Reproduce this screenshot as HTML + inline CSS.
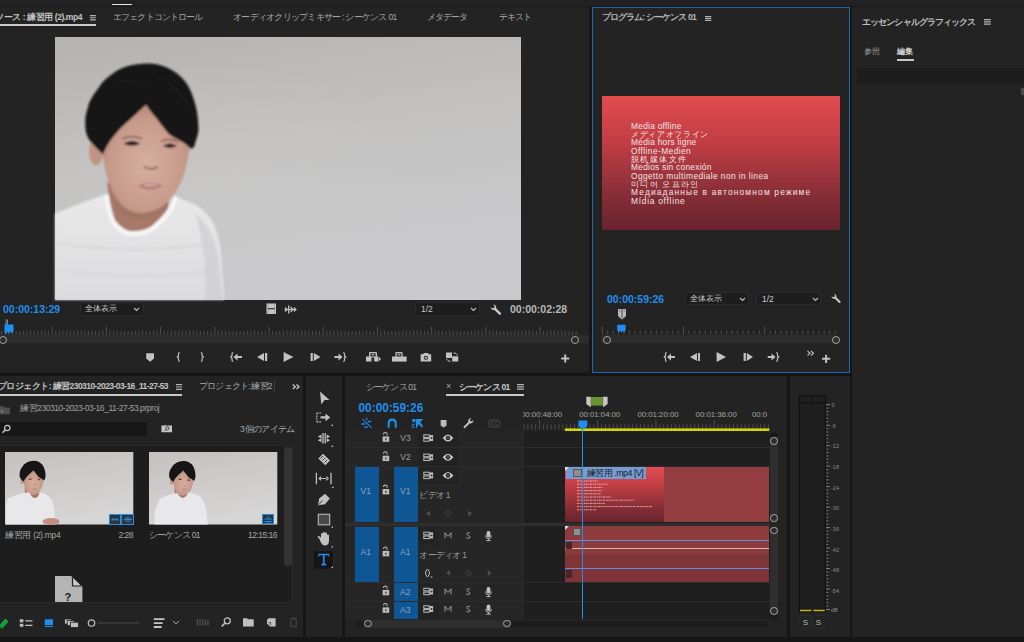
<!DOCTYPE html>
<html><head><meta charset="utf-8">
<style>
*{margin:0;padding:0;box-sizing:border-box}
html,body{width:1024px;height:642px;overflow:hidden;background:#161616;font-family:"Liberation Sans",sans-serif;color:#a9a9a9}
.a{position:absolute}
.t{position:absolute;white-space:nowrap;font-size:8.5px;line-height:10px}
.pnl{position:absolute;background:#232323;overflow:hidden}
.blue{color:#1f8fef}
svg{position:absolute;overflow:visible}
</style></head><body>

<!-- top band -->
<div class="a" style="left:0;top:0;width:1024px;height:6px;background:#222"></div>
<div class="a" style="left:112px;top:3.7px;width:19.6px;height:1.6px;border-radius:1px;background:#e4e4e4"></div>

<!-- ================= SOURCE PANEL ================= -->
<div class="pnl" style="left:0;top:6px;width:589px;height:366.5px" id="src">
<!-- tabs (coords relative: top 6) -->
<div class="t" style="left:-5px;top:5.8px;color:#c4c4c4;font-weight:bold;letter-spacing:-0.42px">ソース : 練習用 (2).mp4</div>
<svg style="left:90.3px;top:8.8px" width="5.8" height="5.5"><path d="M0 0.6H5.8M0 2.75H5.8M0 4.90H5.8" stroke="#b4b4b4" stroke-width="1.2"/></svg>
<div class="a" style="left:0;top:18px;width:96px;height:2px;background:#c8c8c8"></div>
<div class="t" style="left:113px;top:5.8px;letter-spacing:-0.86px">エフェクトコントロール</div>
<div class="t" style="left:233px;top:5.8px;letter-spacing:-0.73px">オーディオクリップミキサー : シーケンス 01</div>
<div class="t" style="left:427px;top:5.8px;letter-spacing:-0.95px">メタデータ</div>
<div class="t" style="left:499px;top:5.8px;letter-spacing:-1.1px">テキスト</div>
<!-- photo -->
<svg style="left:55px;top:31px" width="466" height="263" viewBox="0 0 466 262" preserveAspectRatio="none" id="photo">
<defs>
<linearGradient id="wall" x1="0" y1="0" x2="0.3" y2="1">
<stop offset="0" stop-color="#b5b3b0"/><stop offset="0.5" stop-color="#c3c2c1"/><stop offset="1" stop-color="#cacacd"/>
</linearGradient>
<radialGradient id="wallspot" cx="0.35" cy="0.6" r="0.5">
<stop offset="0" stop-color="#cbcac9" stop-opacity="0.5"/><stop offset="1" stop-color="#cbcac9" stop-opacity="0"/>
</radialGradient>
<radialGradient id="skin" cx="0.5" cy="0.55" r="0.6">
<stop offset="0" stop-color="#d6b0a0"/><stop offset="0.7" stop-color="#c69a8a"/><stop offset="1" stop-color="#ae8474"/>
</radialGradient>
<linearGradient id="swt" x1="0" y1="0" x2="0" y2="1">
<stop offset="0" stop-color="#e8e8e9"/><stop offset="1" stop-color="#dcdcde"/>
</linearGradient>
<filter id="bl" x="-5%" y="-5%" width="110%" height="110%"><feGaussianBlur stdDeviation="0.9"/></filter>
</defs>
<rect width="466" height="262" fill="url(#wall)"/><rect width="466" height="262" fill="url(#wallspot)"/>
<g filter="url(#bl)">
<g id="head">
<!-- neck -->
<path d="M52 145 L114 145 L113 175 L105 190 L78 197 L58 186 Z" fill="#a87868"/>
<path d="M60 160 Q85 185 112 160 L112 172 Q85 190 60 172 Z" fill="#9c7464" opacity="0.7"/>
<!-- ear -->
<ellipse cx="41" cy="114" rx="7" ry="14" fill="#c09484"/>
<!-- face -->
<path d="M47 100 C47 125 52 145 62 162 C70 173 80 177 92 175 C108 172 120 160 128 140 C133 125 135 110 136 95 C130 60 60 55 47 100 Z" fill="url(#skin)"/>
<!-- hair -->
<path d="M94.8 26.4 C80 26 65 30 57 37 C50 42 46 46 44.3 49.8 C38 58 34 64 33 70 C31 76 30 80 30.3 85.3 C30 92 31 97 34 102 C38 108 44 113 48 117 C52 108 56 102 61 96.5 C66 90 71 86 76 81.5 C82 76 87 71 91 67.5 C94 72 97 76 100.4 79.7 C105 86 109 91 113.5 96.5 C118 100 122 102 126.5 104 C130 106 133 108 136 111.5 C139 110 140 109 139.6 107.7 C142 100 144 95 143.4 89 C143 80 142 72 139.6 64.7 C136 52 131 44 124.7 38.6 C116 31 106 27 94.8 26.4 Z" fill="#141414"/>
<path d="M60 45 Q75 40 95 50 M100 40 Q120 45 135 70" stroke="#2a2a2a" stroke-width="1.5" fill="none" opacity="0.6"/>
<!-- eyes/mouth/nose -->
<path d="M68.6 106.3 Q77 101 85.4 106.3 Q77 110 68.6 106.3 Z" fill="#1e1412"/>
<path d="M107.9 108.7 Q115 103.5 121.9 108.7 Q115 112 107.9 108.7 Z" fill="#1e1412"/>
<path d="M67 101.5 Q77 97 87 101.5" stroke="#6a4a40" stroke-width="1.1" fill="none"/>
<path d="M106 104 Q115 99.5 124 105" stroke="#6a4a40" stroke-width="1.1" fill="none"/>
<path d="M89 129 Q96 134 103 129" stroke="#8a6454" stroke-width="1.8" fill="none"/>
<path d="M83 148 Q95 143 108 148 Q95 156 83 148 Z" fill="#b47474"/><path d="M87 148 Q95 146 104 148 Q95 150 87 148 Z" fill="#d8c0b8"/>
</g>
<!-- sweater -->
<path d="M0 176 C10 172 18 168 23 167 C35 162 45 159 51 157 C53 168 55 178 58 184 C64 192 70 196 78 196 C88 196 96 193 101 188 C108 182 114 175 117 169 C119 165 120 162 121 159 C128 162 136 165 144 169 C152 175 158 183 161 192 C165 205 167 215 167 227 C168 240 169 252 169 262 L0 262 Z" fill="url(#swt)"/>
<path d="M140 175 C152 185 160 200 163 220 C165 235 166 250 167 262 L150 262 C152 240 150 210 140 175 Z" fill="#cfcfd2" opacity="0.8"/>
<path d="M51 157 C53 168 55 178 58 184 C64 192 70 196 78 196 C88 196 96 193 101 188 C108 182 114 175 117 169 C119 165 120 162 121 159" stroke="#f6f6f6" stroke-width="5" fill="none"/>
<path d="M3 205 C40 212 100 215 160 205 M3 232 C50 238 110 240 166 232" stroke="#d4d4d6" stroke-width="3" fill="none" opacity="0.55"/>
</g>
</svg>
<!-- timecode row -->
<div class="t blue" style="left:3px;top:298px;font-size:10.5px;font-weight:bold">00:00:13:29</div>
<div class="a" style="left:80px;top:296px;width:64px;height:14px;background:#1d1d1d;border:1px solid #2b2b2b;border-radius:2px"></div>
<div class="t" style="left:85px;top:298px;color:#c8c8c8;font-size:8px;letter-spacing:0px">全体表示</div>
<svg style="left:133px;top:301px" width="7" height="5"><path d="M1 1 L3.5 3.5 L6 1" stroke="#bbb" stroke-width="1.1" fill="none"/></svg>
<!-- film icon -->
<svg style="left:265.5px;top:297px" width="11" height="12"><rect x="0.5" y="0.5" width="9.5" height="10.5" fill="#c4c4c4"/><path d="M2 0.5 V11 M8.5 0.5 V11" stroke="#9a9a9a" stroke-width="0.7"/><path d="M2 5.7 H8.5" stroke="#2a2a2a" stroke-width="1.1"/></svg>
<!-- ripple arrows icon -->
<svg style="left:284px;top:299px" width="13" height="9"><path d="M0.5 4.5 H12" stroke="#c4c4c4" stroke-width="1.1"/><path d="M4.7 0.5 V8.5" stroke="#c4c4c4" stroke-width="1.3"/><path d="M1 2.5 L3.2 4.5 L1 6.5 M6.5 2 L9 4.5 L6.5 7 M9.8 2.5 L12 4.5 L9.8 6.5" stroke="#c4c4c4" stroke-width="1.1" fill="none"/></svg>
<div class="a" style="left:415px;top:296px;width:65px;height:14px;background:#1d1d1d;border:1px solid #2b2b2b;border-radius:2px"></div>
<div class="t" style="left:421px;top:298px;color:#c8c8c8;font-size:8.5px">1/2</div>
<svg style="left:470px;top:301px" width="7" height="5"><path d="M1 1 L3.5 3.5 L6 1" stroke="#bbb" stroke-width="1.1" fill="none"/></svg>
<!-- wrench -->
<svg style="left:489.5px;top:297.5px" width="11.5" height="11.5" viewBox="0 0 12 12"><path transform="translate(12,0) scale(-1,1)" d="M8.5 0.5 A3 3 0 0 0 5.6 4.4 L0.8 9.2 A1.2 1.2 0 0 0 2.6 11 L7.4 6.2 A3 3 0 0 0 11.3 3.3 L9.6 4.6 L7.6 4 L7.2 2.2 Z" fill="#c8c8c8"/></svg>
<div class="t" style="left:510px;top:298px;font-size:10.5px;font-weight:bold;color:#b8b8b8">00:00:02:28</div>
<!-- ruler -->
<svg style="left:0;top:308px" width="590" height="21" id="srcruler"><path d="M1.6 17V21M5.2 17V21M8.8 17V21M12.5 17V21M16.1 17V21M19.7 17V21M23.3 17V21M26.9 17V21M30.5 17V21M34.1 17V21M37.7 17V21M41.4 17V21M45.0 17V21M48.6 17V21M52.2 12.5V21M55.8 17V21M59.4 17V21M63.0 17V21M66.7 17V21M70.3 17V21M73.9 17V21M77.5 17V21M81.1 17V21M84.7 17V21M88.3 17V21M91.9 17V21M95.6 17V21M99.2 17V21M102.8 17V21M106.4 12.5V21M110.0 17V21M113.6 17V21M117.2 17V21M120.9 17V21M124.5 17V21M128.1 17V21M131.7 17V21M135.3 17V21M138.9 17V21M142.5 17V21M146.1 17V21M149.8 17V21M153.4 17V21M157.0 17V21M160.6 12.5V21M164.2 17V21M167.8 17V21M171.4 17V21M175.1 17V21M178.7 17V21M182.3 17V21M185.9 17V21M189.5 17V21M193.1 17V21M196.7 17V21M200.3 17V21M204.0 17V21M207.6 17V21M211.2 17V21M214.8 12.5V21M218.4 17V21M222.0 17V21M225.6 17V21M229.3 17V21M232.9 17V21M236.5 17V21M240.1 17V21M243.7 17V21M247.3 17V21M250.9 17V21M254.5 17V21M258.2 17V21M261.8 17V21M265.4 17V21M269.0 12.5V21M272.6 17V21M276.2 17V21M279.8 17V21M283.5 17V21M287.1 17V21M290.7 17V21M294.3 17V21M297.9 17V21M301.5 17V21M305.1 17V21M308.7 17V21M312.4 17V21M316.0 17V21M319.6 17V21M323.2 12.5V21M326.8 17V21M330.4 17V21M334.0 17V21M337.7 17V21M341.3 17V21M344.9 17V21M348.5 17V21M352.1 17V21M355.7 17V21M359.3 17V21M362.9 17V21M366.6 17V21M370.2 17V21M373.8 17V21M377.4 12.5V21M381.0 17V21M384.6 17V21M388.2 17V21M391.9 17V21M395.5 17V21M399.1 17V21M402.7 17V21M406.3 17V21M409.9 17V21M413.5 17V21M417.1 17V21M420.8 17V21M424.4 17V21M428.0 17V21M431.6 12.5V21M435.2 17V21M438.8 17V21M442.4 17V21M446.1 17V21M449.7 17V21M453.3 17V21M456.9 17V21M460.5 17V21M464.1 17V21M467.7 17V21M471.3 17V21M475.0 17V21M478.6 17V21M482.2 17V21M485.8 12.5V21M489.4 17V21M493.0 17V21M496.6 17V21M500.3 17V21M503.9 17V21M507.5 17V21M511.1 17V21M514.7 17V21M518.3 17V21M521.9 17V21M525.5 17V21M529.2 17V21M532.8 17V21M536.4 17V21M540.0 12.5V21M543.6 17V21M547.2 17V21M550.8 17V21M554.5 17V21M558.1 17V21M561.7 17V21M565.3 17V21M568.9 17V21M572.5 17V21M576.1 17V21" stroke="#4e4e4e" stroke-width="1" fill="none"/></svg>
<div class="a" style="left:0;top:329px;width:590px;height:8px;background:#2d2d2d"></div>
<div class="a" style="left:-1px;top:330px;width:8px;height:8px;border:1.7px solid #a4a4a4;border-radius:50%;background:#2b2b2b"></div>
<div class="a" style="left:571px;top:330px;width:8px;height:8px;border:1.7px solid #a4a4a4;border-radius:50%;background:#2b2b2b"></div>
<!-- playhead -->
<svg style="left:4px;top:313px" width="10" height="16" viewBox="0 0 10 16"><path d="M2 0.5 V6 M3.5 0.5 V6" stroke="#8aa8c8" stroke-width="0.8"/><path d="M0.5 5.5 H9.5 V12 L8 14.5 L6.5 12.5 L5 14.5 L3.5 12.5 L2 15.5 L0.5 13 Z" fill="#1f8fef"/></svg>
<!-- transport -->
<svg style="left:0;top:340px" width="590" height="26" id="srctrans">
<g fill="#c2c2c2" stroke="#c2c2c2">
<path d="M146.2 7.2 H154 V12.5 L150.1 15.8 L146.2 12.5 Z" stroke="none"/>
<path d="M179.8 6.5 Q178.5 6.5 178.5 8.0 V10.0 L177.2 11.0 L178.5 12.0 V14.0 Q178.5 15.5 179.8 15.5" fill="none" stroke-width="1.2"/>
<path d="M200.79999999999998 6.5 Q202.1 6.5 202.1 8.0 V10.0 L203.4 11.0 L202.1 12.0 V14.0 Q202.1 15.5 200.79999999999998 15.5" fill="none" stroke-width="1.2"/>
<path d="M233.3 6.5 Q232.0 6.5 232.0 8.0 V10.0 L230.7 11.0 L232.0 12.0 V14.0 Q232.0 15.5 233.3 15.5" fill="none" stroke-width="1.2"/>
<path d="M233.5 11 L237.5 7.5 V14.5 Z M237 10 H242 V12 H237 Z" stroke="none"/>
<path d="M257 11 L264 7 V15 Z M265 7 H267.2 V15 H265 Z" stroke="none"/>
<path d="M283.6 6 L293.4 11 L283.6 16 Z" stroke="none"/>
<path d="M310.6 7 H312.8 V15 H310.6 Z M313.8 7 L320.5 11 L313.8 15 Z" stroke="none"/>
<path d="M334.4 10 H339 V12 H334.4 Z M338.5 7.5 L342.5 11 L338.5 14.5 Z" stroke="none"/>
<path d="M343.2 6.5 Q344.5 6.5 344.5 8.0 V10.0 L345.8 11.0 L344.5 12.0 V14.0 Q344.5 15.5 343.2 15.5" fill="none" stroke-width="1.2"/>
<path d="M366 10.5 H371.5 V15.6 H366 Z M374.2 10.5 H378.5 V15.6 H374.2 Z M379 11 L381 13 L379 15 Z" stroke="none"/>
<rect x="369" y="6" width="8" height="5.5" rx="1" stroke="none"/>
<rect x="370.3" y="7.2" width="5.4" height="3.3" fill="#3a3a3a" stroke="none"/>
<path d="M371.6 8 H374.4 L373 9.6 Z" stroke="none"/>
<path d="M392 10.5 H406.6 V15.6 H392 Z" stroke="none"/>
<rect x="395.4" y="6" width="7.2" height="5.5" rx="1" stroke="none"/>
<rect x="396.6" y="7.2" width="4.8" height="3.3" fill="#3a3a3a" stroke="none"/>
<path d="M397.6 8 H400.4 L399 9.6 Z" stroke="none"/>
<path d="M420.6 8.3 H423 L424 7 H427.8 L428.8 8.3 H431.2 V15.6 H420.6 Z" stroke="none"/>
<circle cx="425.9" cy="11.8" r="2.1" fill="#2a2a2a" stroke="none"/>
<circle cx="425.9" cy="11.8" r="1.1" stroke="none"/>
<path d="M446 6.6 H452 V12 H446 Z M452.2 10.2 H458.2 V15.6 H452.2 Z" stroke="none"/>
<path d="M453.5 6.8 A5 5 0 0 1 457.8 9.5 M450.5 15.4 A5 5 0 0 1 446.2 12.6" fill="none" stroke-width="1"/>
<path d="M561.2 12.6 H569.2 M565.2 8.6 V16.6" stroke-width="2" fill="none"/>
</g>
</svg>
<div class="a" style="left:0;top:366px;width:590px;height:1px;background:#1d1d1d"></div>
</div>

<!-- ================= PROGRAM PANEL ================= -->
<div class="pnl" style="left:592px;top:7px;width:258px;height:366px;border:1px solid #1b68b0" id="prog">
<!-- origin abs (593,8) -->
<div class="t" style="left:8.5px;top:4px;color:#b8b8b8;font-weight:bold;font-size:8.5px;letter-spacing:-0.85px">プログラム: シーケンス 01</div>
<svg style="left:112.2px;top:7.6px" width="6.3" height="5.1"><path d="M0 0.6H6.3M0 2.55H6.3M0 4.50H6.3" stroke="#b4b4b4" stroke-width="1.2"/></svg>
<div class="a" style="left:9px;top:88px;width:238px;height:134px;background:linear-gradient(#e24c4e,#c03e44 35%,#852d36 75%,#69242e)"></div>
<div class="a" style="left:38px;top:113.6px;color:#f4e4e4;font-size:8.4px;line-height:8.35px;white-space:nowrap;letter-spacing:0.25px" id="offl"><span>Media offline</span><br><span style="letter-spacing:0.65px">メディアオフライン</span><br><span>Média hors ligne</span><br><span style="letter-spacing:0.42px">Offline-Medien</span><br><span style="letter-spacing:1.4px">脱机媒体文件</span><br><span>Medios sin conexión</span><br><span style="letter-spacing:0.4px">Oggetto multimediale non in linea</span><br><span style="letter-spacing:1.25px">미디어 오프라인</span><br><span style="letter-spacing:1.17px">Медиаданные в автономном режиме</span><br><span style="letter-spacing:0.73px">Mídia offline</span></div>
<!-- controls -->
<div class="t blue" style="left:14px;top:286px;font-size:10.5px;font-weight:bold">00:00:59:26</div>
<div class="a" style="left:92px;top:284px;width:64px;height:13px;background:#1d1d1d;border:1px solid #2b2b2b;border-radius:2px"></div>
<div class="t" style="left:97px;top:286px;color:#c8c8c8;font-size:8px;letter-spacing:0px">全体表示</div>
<svg style="left:146px;top:289px" width="7" height="5"><path d="M1 1 L3.5 3.5 L6 1" stroke="#bbb" stroke-width="1.1" fill="none"/></svg>
<div class="a" style="left:163px;top:284px;width:65px;height:13px;background:#1d1d1d;border:1px solid #2b2b2b;border-radius:2px"></div>
<div class="t" style="left:169px;top:286px;color:#c8c8c8;font-size:8.5px">1/2</div>
<svg style="left:219px;top:289px" width="7" height="5"><path d="M1 1 L3.5 3.5 L6 1" stroke="#bbb" stroke-width="1.1" fill="none"/></svg>
<svg style="left:238px;top:285px" width="10" height="11" viewBox="0 0 12 12"><path transform="translate(12,0) scale(-1,1)" d="M8.5 0.5 A3 3 0 0 0 5.6 4.4 L0.8 9.2 A1.2 1.2 0 0 0 2.6 11 L7.4 6.2 A3 3 0 0 0 11.3 3.3 L9.6 4.6 L7.6 4 L7.2 2.2 Z" fill="#c8c8c8"/></svg>
<!-- marker -->
<svg style="left:24px;top:300px" width="10" height="12" viewBox="0 0 10 12"><path d="M1 1 H9 V8 L5 11.5 L1 8 Z" fill="#b8b8b8"/><path d="M5 1 V10" stroke="#555" stroke-width="1"/><circle cx="2.8" cy="2.8" r="0.6" fill="#444"/><circle cx="7.2" cy="2.8" r="0.6" fill="#444"/></svg>
<svg style="left:0;top:310px" width="256" height="30" id="progruler"><path d="M9.3 8.3V16.3M14.7 12.7V16.3M20.1 12.7V16.3M25.5 12.7V16.3M31.0 12.7V16.3M36.4 12.7V16.3M41.8 12.7V16.3M47.2 12.7V16.3M52.6 12.7V16.3M58.0 12.7V16.3M63.4 12.7V16.3M68.8 12.7V16.3M74.3 12.7V16.3M79.7 12.7V16.3M85.1 12.7V16.3M90.5 8.3V16.3M95.9 12.7V16.3M101.3 12.7V16.3M106.7 12.7V16.3M112.2 12.7V16.3M117.6 12.7V16.3M123.0 12.7V16.3M128.4 12.7V16.3M133.8 12.7V16.3M139.2 12.7V16.3M144.6 12.7V16.3M150.0 12.7V16.3M155.5 12.7V16.3M160.9 12.7V16.3M166.3 12.7V16.3M171.7 8.3V16.3M177.1 12.7V16.3M182.5 12.7V16.3M187.9 12.7V16.3M193.4 12.7V16.3M198.8 12.7V16.3M204.2 12.7V16.3M209.6 12.7V16.3M215.0 12.7V16.3M220.4 12.7V16.3M225.8 12.7V16.3M231.2 12.7V16.3M236.7 12.7V16.3M242.1 12.7V16.3" stroke="#4e4e4e" stroke-width="1" fill="none"/></svg>
<div class="a" style="left:8px;top:327px;width:235px;height:8px;background:#2d2d2d"></div>
<div class="a" style="left:10px;top:327.5px;width:8px;height:8px;border:1.7px solid #a4a4a4;border-radius:50%;background:#2d2d2d"></div>
<div class="a" style="left:238.5px;top:327.5px;width:8px;height:8px;border:1.7px solid #a4a4a4;border-radius:50%;background:#2d2d2d"></div>
<svg style="left:24px;top:316px" width="10" height="10" viewBox="0 0 10 10"><path d="M0.2 0.7 H8.6 V6 L7.2 8.5 L5.8 6.8 L4.4 8.5 L3 6.8 L1.6 8.5 L0.2 6 Z" fill="#1f8fef"/></svg>
<svg style="left:0;top:342px" width="256" height="28" id="progtrans">
<g fill="#c2c2c2" stroke="#c2c2c2">
<!-- svg y = abs-346 -->
<path d="M73.8 2.5 Q72.5 2.5 72.5 4.0 V6.0 L71.2 7.0 L72.5 8.0 V10.0 Q72.5 11.5 73.8 11.5" fill="none" stroke-width="1.2"/>
<path d="M74 7 L78 3.5 V10.5 Z M77.5 6 H82 V8 H77.5 Z" stroke="none"/>
<path d="M97 7 L104 3 V11 Z M105 3 H107 V11 H105 Z" stroke="none"/>
<path d="M123.6 2 L133 7 L123.6 12 Z" stroke="none"/>
<path d="M150.6 3 H152.8 V11 H150.6 Z M153.8 3 L160 7 L153.8 11 Z" stroke="none"/>
<path d="M174.7 6 H179 V8 H174.7 Z M178.5 3.5 L182.5 7 L178.5 10.5 Z" stroke="none"/>
<path d="M183.2 2.5 Q184.5 2.5 184.5 4.0 V6.0 L185.8 7.0 L184.5 8.0 V10.0 Q184.5 11.5 183.2 11.5" fill="none" stroke-width="1.2"/>
<path d="M214.5 1 L217 3.3 L214.5 5.5 M218 1 L220.5 3.3 L218 5.5" fill="none" stroke-width="1.1"/>
<path d="M229 8.8 H237.2 M233.1 4.7 V12.9" stroke-width="2" fill="none"/>
</g>
</svg>
</div>

<!-- ================= ESSENTIAL GRAPHICS ================= -->
<div class="pnl" style="left:852px;top:6px;width:172px;height:631px" id="eg">
<!-- origin (852,6) -->
<div class="t" style="left:10px;top:10.5px;color:#c0c0c0;font-weight:bold;letter-spacing:-0.89px">エッセンシャルグラフィックス</div>
<svg style="left:131.8px;top:13.4px" width="6.8" height="5.8"><path d="M0 0.6H6.8M0 2.90H6.8M0 5.20H6.8" stroke="#b4b4b4" stroke-width="1.2"/></svg>
<div class="t" style="left:12px;top:41px;color:#a0a0a0;font-size:8px">参照</div>
<div class="t" style="left:45px;top:41px;color:#d0d0d0;font-size:8px;font-weight:bold">編集</div>
<div class="a" style="left:45px;top:53px;width:17px;height:1.5px;background:#c8c8c8"></div>
<div class="a" style="left:4.5px;top:61.5px;width:168px;height:17px;background:#1d1d1d"></div>
<div class="a" style="left:168.5px;top:81.5px;width:4px;height:7px;background:#4a4a4a"></div>
</div>

<!-- ================= PROJECT ================= -->
<div class="pnl" style="left:0;top:376px;width:303px;height:261px" id="proj">
<!-- origin (0,376) -->
<svg width="0" height="0" style="position:absolute"><defs>
<linearGradient id="tw" x1="0" y1="0" x2="0.3" y2="1"><stop offset="0" stop-color="#c4c2bf"/><stop offset="1" stop-color="#d6d5d5"/></linearGradient>
<filter id="tb"><feGaussianBlur stdDeviation="0.5"/></filter>
</defs></svg>
<div class="t" style="left:-2px;top:5px;color:#c4c4c4;font-weight:bold;letter-spacing:-0.56px">プロジェクト: 練習230310-2023-03-16_11-27-53</div>
<svg style="left:175.7px;top:7.6px" width="6.1" height="6.0"><path d="M0 0.6H6.1M0 3.00H6.1M0 5.40H6.1" stroke="#b4b4b4" stroke-width="1.2"/></svg>
<div class="a" style="left:0;top:18px;width:182px;height:1.5px;background:#c8c8c8"></div>
<div class="t" style="left:199px;top:5px;color:#a8a8a8;letter-spacing:-0.8px;width:74px;overflow:hidden">プロジェクト: 練習2</div>
<div class="a" style="left:273.5px;top:3px;width:1px;height:14px;background:#3a3a3a"></div>
<svg style="left:292px;top:7.5px" width="9" height="6"><path d="M0.8 0.5 L3.3 2.7 L0.8 4.9 M4.5 0.5 L7 2.7 L4.5 4.9" stroke="#c8c8c8" stroke-width="1.3" fill="none"/></svg>
<!-- folder -->
<svg style="left:-1px;top:28.5px" width="12" height="10"><path d="M0 1 H4 L5 2.5 H11 V9.3 H0 Z" fill="#4f4f4f"/><path d="M2.5 4 V7 H5" stroke="#888" stroke-width="0.8" fill="none"/></svg>
<div class="t" style="left:20px;top:27px;color:#a0a0a0;letter-spacing:-0.45px">練習230310-2023-03-16_11-27-53.prproj</div>
<div class="a" style="left:0;top:46px;width:147px;height:14px;background:#171717;border-radius:0 2px 2px 0"></div>
<svg style="left:1px;top:48px" width="11" height="10"><circle cx="6.3" cy="4" r="2.7" stroke="#c8c8c8" stroke-width="1.2" fill="none"/><path d="M4.3 6 L1.5 8.8" stroke="#c8c8c8" stroke-width="1.5"/></svg>
<svg style="left:161px;top:48px" width="12" height="9"><path d="M0.4 1.5 H3.5 L4.5 0.5 V1.5 H11 V8.3 H0.4 Z" fill="#c4c4c4"/><circle cx="6.3" cy="4.3" r="1.6" stroke="#333" stroke-width="0.9" fill="none"/><path d="M5.2 5.4 L3.8 6.8" stroke="#333" stroke-width="1"/></svg>
<div class="t" style="left:240px;top:48px;color:#a8a8a8;letter-spacing:-0.91px">3 個のアイテム</div>
<!-- grid area -->
<div class="a" style="left:0;top:69px;width:293px;height:158px;background:#1d1d1d;border-top:1px solid #2a2a2a;border-right:1px solid #2a2a2a;border-bottom:1px solid #2a2a2a"></div>
<div class="a" style="left:284px;top:71px;width:7.5px;height:119px;background:#333;border-radius:3px"></div>
<svg style="left:5.3px;top:76.2px" width="128.3" height="72.5" viewBox="0 0 128.3 72.5">
<rect width="128.3" height="72.5" fill="url(#tw)"/>
<g filter="url(#tb)">
<use href="#head" transform="translate(7.6,2.8) scale(0.23)"/>
<path d="M1 72.5 L1 56 Q1.5 48 3.5 46.1 Q12 42 24 40.3 Q27 46.1 29.9 46.1 Q33 46 35.7 40.3 Q41 42 44.5 44.7 Q48 49 48.9 56.4 L50.4 72.5 Z" fill="#e8e8ea"/>
<ellipse cx="46" cy="69.5" rx="8.5" ry="3.6" fill="#c09080"/>
</g>
</svg>
<div class="a" style="left:108.5px;top:137.5px;width:12px;height:11px;background:#333;border:1.3px solid #1f8fef"></div>
<div class="a" style="left:121px;top:137.5px;width:12.5px;height:11px;background:#333;border:1.3px solid #1f8fef"></div>
<svg style="left:108.5px;top:137.5px" width="26" height="11"><path d="M3 5.5 H9 M3.2 4 V7 M6 4 V7 M8.8 4 V7 M15 5.5 H23 M17 3 V8 M19 2.5 V8.5 M21 3.5 V7.5" stroke="#1f8fef" stroke-width="0.9"/></svg>
<div class="t" style="left:5px;top:154px;color:#a8a8a8;letter-spacing:-0.3px">練習用 (2).mp4</div>
<div class="t" style="left:118.5px;top:154px;color:#a8a8a8;letter-spacing:-0.52px">2:28</div>
<svg style="left:148.9px;top:76.4px" width="128.3" height="72.5" viewBox="0 0 128.3 72.5">
<rect width="128.3" height="72.5" fill="url(#tw)"/>
<g filter="url(#tb)">
<use href="#head" transform="translate(13.1,2.8) scale(0.233)"/>
<path d="M5.6 72.5 L5.6 62 Q8 50 12.05 45.9 Q20 42 28.2 41.1 Q31 45.9 33.8 45.9 Q37 45.5 39.4 40.3 Q46 42 51.5 44.3 Q56 50 57.2 58.8 L58.8 72.5 Z" fill="#e8e8ea"/>
</g>
</svg>
<div class="a" style="left:261.5px;top:137.7px;width:12.5px;height:10.7px;background:#333;border:1.3px solid #1f8fef"></div>
<svg style="left:261.5px;top:137.7px" width="13" height="11"><path d="M6.2 2 V4.5 M2.5 5 H10 M2.5 7.5 H10 M6.2 7 V9" stroke="#1f8fef" stroke-width="1"/></svg>
<div class="t" style="left:149px;top:153.5px;color:#a8a8a8;letter-spacing:-0.76px">シーケンス 01</div>
<div class="t" style="left:248px;top:153.5px;color:#a8a8a8;letter-spacing:-0.51px">12:15:16</div>
<!-- missing file icon -->
<div class="a" style="left:0;top:190px;width:292px;height:36px;overflow:hidden">
<svg style="left:55.4px;top:9.8px" width="28" height="30" viewBox="0 0 28 30"><path d="M0 0 H16 L27.4 11 V30 H0 Z" fill="#b4b4b4"/><path d="M17.5 1.5 V10 H26" fill="#c8c8c8" stroke="#1d1d1d" stroke-width="1.2"/><text x="9.5" y="25" font-family="Liberation Sans" font-weight="bold" font-size="11" fill="#1a1a1a">?</text></svg>
</div>
<!-- toolbar (y = abs-376) -->
<svg style="left:0;top:238px" width="303" height="18" id="projtb">
<!-- abs y 623 -> 9 -->
<path d="M-1 11.5 L5.3 4.6 L8.6 7.6 L2.3 14.5 Z" fill="#14a03c"/><path d="M-1 12 L1.8 14.8" stroke="#0c6a28" stroke-width="1"/>
<rect x="19.8" y="5.3" width="3.6" height="3" fill="#c0c0c0"/><rect x="19.8" y="9.8" width="3.6" height="3" fill="#c0c0c0"/>
<path d="M25.2 6.8 H32.5 M25.2 11.3 H32.5" stroke="#c0c0c0" stroke-width="1.2"/>
<rect x="44.7" y="5.3" width="8.3" height="5.8" fill="#1f8fef"/><path d="M44.7 12.5 H53" stroke="#1f8fef" stroke-width="1"/>
<rect x="64.6" y="5" width="7" height="5" fill="#bdbdbd" stroke="#232323" stroke-width="0.8"/>
<rect x="67.2" y="6.6" width="7" height="5" fill="#bdbdbd" stroke="#232323" stroke-width="0.8"/>
<rect x="70.4" y="8.2" width="8" height="5.2" fill="#bdbdbd" stroke="#232323" stroke-width="0.8"/>
<circle cx="91.5" cy="9" r="3.2" stroke="#b8b8b8" stroke-width="1.3" fill="none"/>
<path d="M97.4 9 H139" stroke="#4a4a4a" stroke-width="1"/>
<path d="M153.8 5.2 H164.5 M153.8 9.1 H162.6 M153.8 13 H161.6" stroke="#c4c4c4" stroke-width="1.8"/>
<path d="M173 7 L176 9.8 L179 7" stroke="#aaa" stroke-width="1" fill="none"/>
<path d="M197.5 5 V11.5 M200 5 V11.5 M203 5 V11.5 M205.5 6 V11.5 M208 6 V11.5" stroke="#505050" stroke-width="1.3"/>
<circle cx="227.3" cy="6.8" r="3" stroke="#c0c0c0" stroke-width="1.3" fill="none"/><path d="M225 9 L221.7 12.5" stroke="#c0c0c0" stroke-width="1.7"/>
<path d="M243 4.3 H247 L248 5.3 H253.7 V12.5 H243 Z" fill="#c0c0c0"/>
<path d="M268.5 4.3 H275.6 V12.5 H270 L267 9.5 V6 Z" fill="#c0c0c0"/><path d="M268.5 8.5 H270.5 V11" stroke="#333" stroke-width="0.8" fill="none"/>
<path d="M290 5 H297 M292 5 V4 H295 V5 M290.8 6 V12.8 H296.2 V6" stroke="#4a4a4a" stroke-width="1" fill="none"/>
</svg>
</div>

<!-- ================= TOOLS ================= -->
<div class="pnl" style="left:306px;top:376px;width:36px;height:261px" id="tools">
<!-- origin (306,376) -->
<svg style="left:0;top:0" width="36" height="261" id="toolsvg">
<g fill="#c0c0c0" stroke="none">
<!-- arrow: abs x 319.8-329.2 y 391.6-404.3 -> rel x 13.8-23.2 y 15.6-28.3 -->
<path d="M14 15.6 L23.5 24 L18.6 24 L15.3 28.5 Z"/>
<!-- track select rel x 10.5-24.5 y 36.7-46 -->
<path d="M10.8 37 H16 M10.8 37 V45.8 M10.8 45.8 H16" stroke="#c0c0c0" stroke-width="1.2" stroke-dasharray="1.6 1" fill="none"/>
<path d="M14.5 40.2 H19.5 V37.5 L24.2 41.4 L19.5 45.3 V42.6 H14.5 Z"/>
<path d="M25 50 L27 48 V50 Z"/>
<!-- ripple rel x 11.8-24 y 57-67.6 -->
<path d="M17 57 V67.6 M19.2 57 V67.6" stroke="#c0c0c0" stroke-width="1.3"/>
<path d="M11.8 60.5 L15.5 58.5 V62.5 Z M24 60.5 L20.7 58.5 V62.5 Z M11.8 64.3 L15.5 62.3 V66.3 Z M24 64.3 L20.7 62.3 V66.3 Z"/>
<path d="M25 71 L27 69 V71 Z"/>
<!-- razor rel x 12.3-24 y 77.8-89.2 -->
<path d="M12.3 82.5 L17 77.8 L24 84.5 L19.3 89.2 Z"/>
<path d="M14.5 82.5 L17 80 M16.5 84.5 L19 82 M18.5 86.5 L21 84" stroke="#2a2a2a" stroke-width="0.9"/>
<!-- slip rel x 9.7-25.7 y 96.8-108.3 -->
<path d="M10.4 96.8 V108.3 M25 96.8 V108.3" stroke="#c0c0c0" stroke-width="1.3"/>
<path d="M12.3 102.5 L15 100 V105 Z M23 102.5 L20.3 100 V105 Z M14 101.9 H21.3 V103.1 H14 Z"/>
<path d="M25.5 112 L27.5 110 V112 Z"/>
<!-- pen rel x 11.8-24 y 117.7-129.3 -->
<path d="M12 129.3 L13.2 122.5 L19 117.8 L23.8 122.5 L19 128.2 Z"/>
<path d="M12.5 128.8 L16.5 124.5" stroke="#2a2a2a" stroke-width="0.9"/>
<!-- rect rel x 11.8-24 y 137.8-149.2 -->
<rect x="12.3" y="138.3" width="11.4" height="10.5" fill="#484848" stroke="#b8b8b8" stroke-width="1.1"/>
<path d="M25 151.8 L27 149.8 V151.8 Z"/>
<!-- hand rel x 11.3-24 y 156.9-169.5 -->
<path d="M13.5 163 Q11 161 12 160 Q13 159.5 15 161.5 V157.8 Q15 157 16 157 Q17 157 17 158 V161 V156.6 Q17 156 18 156 Q19 156 19 157 V161 V157.3 Q19 156.6 20 156.6 Q21 156.6 21 157.5 V162 V159 Q21 158.4 22 158.4 Q23 158.4 23 159.2 V164.5 Q23 169.5 18.5 169.5 Q15.5 169.5 13.5 163 Z"/>
<path d="M25 171.5 L27 169.5 V171.5 Z"/>
<!-- type selected rel x 7.2-27.5 y 174.6-193.2 -->
<rect x="7.2" y="174.6" width="20.3" height="18.6" rx="1.5" fill="#151515" stroke="#2a2a2a" stroke-width="0.8"/>
<path d="M12.3 177.7 H23.2 V180.5 H22.2 V179.3 H18.6 V187.8 H20.2 V189.4 H15.3 V187.8 H16.9 V179.3 H13.3 V180.5 H12.3 Z" fill="#1f8fef"/>
<path d="M25 192 L27 190 V192 Z"/>
</g>
</svg>
</div>

<!-- ================= TIMELINE ================= -->
<div class="pnl" style="left:345px;top:376px;width:442px;height:261px" id="tl">
<!-- origin (345,376) -->
<div class="t" style="left:20.5px;top:5.5px;color:#a8a8a8;letter-spacing:-0.75px">シーケンス 01</div>
<div class="t" style="left:101px;top:5px;color:#a8a8a8;font-size:9px">×</div>
<div class="t" style="left:113.7px;top:5.5px;color:#c8c8c8;font-weight:bold;letter-spacing:-0.75px">シーケンス 01</div>
<svg style="left:172.1px;top:8px" width="6.9" height="5.8"><path d="M0 0.6H6.9M0 2.90H6.9M0 5.20H6.9" stroke="#b4b4b4" stroke-width="1.2"/></svg>
<div class="a" style="left:101px;top:18px;width:78px;height:1.5px;background:#c8c8c8"></div>
<div class="t blue" style="left:13.5px;top:25px;font-size:11.9px;line-height:14px;font-weight:bold">00:00:59:26</div>
<!-- track header bg -->
<div class="a" style="left:0;top:55px;width:177.5px;height:188px;background:#262626"></div>
<!-- content bg -->
<div class="a" style="left:177.5px;top:55px;width:247px;height:188px;background:#1f1f1f;border-left:1px solid #2a2a2a"></div>
<!-- icon column darker bg rows V3,V2,V1top, A1 top, A2,A3 -->
<div class="a" style="left:73.3px;top:55px;width:40.7px;height:16px;background:#232323"></div>
<div class="a" style="left:73.3px;top:72px;width:40.7px;height:18px;background:#232323"></div>
<div class="a" style="left:73.3px;top:91px;width:40.7px;height:17px;background:#232323"></div>
<div class="a" style="left:73.3px;top:150.5px;width:20.7px;height:18px;background:#232323"></div>
<div class="a" style="left:73.3px;top:207px;width:20.7px;height:17px;background:#232323"></div>
<div class="a" style="left:73.3px;top:225px;width:20.7px;height:18px;background:#232323"></div>
<!-- row separators -->
<div class="a" style="left:0;top:71px;width:424.5px;height:1px;background:#2c2c2c"></div>
<div class="a" style="left:0;top:90px;width:424.5px;height:1px;background:#2c2c2c"></div>
<div class="a" style="left:0;top:146.5px;width:424.5px;height:3.5px;background:#2e2e2e"></div>
<div class="a" style="left:0;top:206px;width:424.5px;height:1px;background:#2c2c2c"></div>
<div class="a" style="left:0;top:224.5px;width:424.5px;height:1px;background:#2c2c2c"></div>
<!-- blue target boxes -->
<div class="a" style="left:9.5px;top:90.5px;width:24.2px;height:55.7px;background:#0f5694"></div>
<div class="a" style="left:49px;top:90.5px;width:24px;height:55.7px;background:#0f5694"></div>
<div class="a" style="left:9.5px;top:150.5px;width:24.2px;height:55.5px;background:#0f5694"></div>
<div class="a" style="left:49px;top:150.5px;width:24px;height:55.5px;background:#0f5694"></div>
<div class="a" style="left:49px;top:207px;width:24px;height:17.5px;background:#0f5694"></div>
<div class="a" style="left:49px;top:225.5px;width:24px;height:17.5px;background:#0f5694"></div>
<div class="t" style="left:55.3px;top:57px;color:#a0a0a0;font-size:8.5px">V3</div>
<div class="t" style="left:55.3px;top:76px;color:#a0a0a0;font-size:8.5px">V2</div>
<div class="t" style="left:15.5px;top:110px;color:#8ea4bc;font-size:8.5px">V1</div>
<div class="t" style="left:55px;top:110px;color:#8ea4bc;font-size:8.5px">V1</div>
<div class="t" style="left:15.5px;top:170.5px;color:#8ea4bc;font-size:8.5px">A1</div>
<div class="t" style="left:55px;top:170.5px;color:#8ea4bc;font-size:8.5px">A1</div>
<div class="t" style="left:55px;top:210.5px;color:#8ea4bc;font-size:8.5px">A2</div>
<div class="t" style="left:55px;top:228.5px;color:#8ea4bc;font-size:8.5px">A3</div>
<div class="t" style="left:74.3px;top:113.5px;color:#9a9a9a;letter-spacing:-0.72px">ビデオ 1</div>
<div class="t" style="left:74.3px;top:173.5px;color:#9a9a9a;letter-spacing:-0.73px">オーディオ 1</div>
<svg style="left:0;top:0" width="442" height="261" id="tlsvg">
<!-- toolbar icons y rel 47.3 -->
<g fill="#1f8fef" stroke="none">
<path d="M17.5 43.2 L26.3 51.6" stroke="#1f8fef" stroke-width="1.1"/>
<rect x="21" y="41.8" width="1.3" height="2.2"/>
<rect x="16.3" y="47.3" width="4" height="1.4"/>
<rect x="22.6" y="44.8" width="3.6" height="1.4"/>
<rect x="19.2" y="50.4" width="3.8" height="1.3"/>
<path d="M43.7 51.7 V47.2 Q43.7 43.6 47.2 43.6 Q50.7 43.6 50.7 47.2 V51.7" fill="none" stroke="#1f8fef" stroke-width="2.1"/>
<rect x="67.3" y="43" width="2.8" height="3"/>
<path d="M69.8 48.2 H67.6 V51.3 H69.8" fill="none" stroke="#1f8fef" stroke-width="0.9"/>
<path d="M70.6 43 H78.2 L75.2 46.4 L78.2 50 L76.6 51.4 L73.6 48 L71.2 52.8 Z"/>
</g>
<path d="M95.7 44 H101.5 V49.5 L98.6 51.5 L95.7 49.5 Z" fill="#bdbdbd"/>
<path d="M126.5 42.4 A2.8 2.8 0 0 0 123.2 46 L118.7 50.5 A1 1 0 0 0 120.1 51.9 L124.6 47.4 A2.8 2.8 0 0 0 128.2 44.1 L126.7 45.3 L125.3 44.9 L125 43.5 Z" fill="#bdbdbd"/>
<rect x="143.8" y="44.2" width="11.2" height="6.8" rx="1.6" fill="none" stroke="#4a4a4a" stroke-width="1"/>
<path d="M148.8 46 Q146.3 45.6 146.3 47.6 Q146.3 49.6 148.8 49.2 M153 46 Q150.5 45.6 150.5 47.6 Q150.5 49.6 153 49.2" fill="none" stroke="#4a4a4a" stroke-width="0.9"/>
<!-- ruler -->
<clipPath id="rclip"><rect x="178" y="30" width="246.5" height="15"/></clipPath><text font-family="Liberation Sans" font-size="7.8" fill="#a4a4a4" y="41" clip-path="url(#rclip)">
<tspan x="176">00:00:48:00</tspan><tspan x="234.2">00:01:04:00</tspan><tspan x="292.4">00:01:20:00</tspan><tspan x="350.6">00:01:36:00</tspan><tspan x="407">00:0</tspan>
</text>

<path d="M179.0 48.4V53.3M182.9 48.4V53.3M186.7 48.4V53.3M190.6 48.4V53.3M194.5 44.0V53.3M198.4 48.4V53.3M202.3 48.4V53.3M206.1 48.4V53.3M210.0 48.4V53.3M213.9 48.4V53.3M217.8 48.4V53.3M221.7 48.4V53.3M225.5 48.4V53.3M229.4 48.4V53.3M233.3 48.4V53.3M237.2 48.4V53.3M241.1 48.4V53.3M244.9 48.4V53.3M248.8 48.4V53.3M252.7 44.0V53.3M256.6 48.4V53.3M260.5 48.4V53.3M264.3 48.4V53.3M268.2 48.4V53.3M272.1 48.4V53.3M276.0 48.4V53.3M279.9 48.4V53.3M283.7 48.4V53.3M287.6 48.4V53.3M291.5 48.4V53.3M295.4 48.4V53.3M299.3 48.4V53.3M303.1 48.4V53.3M307.0 48.4V53.3M310.9 44.0V53.3M314.8 48.4V53.3M318.7 48.4V53.3M322.5 48.4V53.3M326.4 48.4V53.3M330.3 48.4V53.3M334.2 48.4V53.3M338.1 48.4V53.3M341.9 48.4V53.3M345.8 48.4V53.3M349.7 48.4V53.3M353.6 48.4V53.3M357.5 48.4V53.3M361.3 48.4V53.3M365.2 48.4V53.3M369.1 44.0V53.3M373.0 48.4V53.3M376.9 48.4V53.3M380.7 48.4V53.3M384.6 48.4V53.3M388.5 48.4V53.3M392.4 48.4V53.3M396.3 48.4V53.3M400.1 48.4V53.3M404.0 48.4V53.3M407.9 48.4V53.3M411.8 48.4V53.3M415.7 48.4V53.3M419.5 48.4V53.3M423.4 48.4V53.3" stroke="#4e4e4e" stroke-width="1" fill="none"/>
<rect x="219.8" y="52.4" width="204.5" height="2.6" fill="#d4d40c"/>
<!-- green marker -->
<path d="M241.3 20.8 H245.8 V31.3 L243.3 29.5 L241.3 28 Z M262.6 20.8 H258.1 V31.3 L260.6 29.5 L262.6 28 Z" fill="#c8c8c8"/>
<rect x="245.9" y="21" width="12" height="8.6" fill="#6b9232"/>
<!-- lock icons -->
<g transform="translate(0,62)"><path d="M38.5 -3.6 Q38.5 -5.5 40.3 -5.5 Q42.1 -5.5 42.1 -3.8 V-2.8" fill="none" stroke="#bdbdbd" stroke-width="1.1"/><rect x="37.6" y="-1.6" width="6.6" height="5.4" fill="#bdbdbd"/><rect x="40.3" y="0.2" width="1.2" height="2" fill="#2a2a2a"/></g><g transform="translate(0,81.3)"><path d="M38.5 -3.6 Q38.5 -5.5 40.3 -5.5 Q42.1 -5.5 42.1 -3.8 V-2.8" fill="none" stroke="#bdbdbd" stroke-width="1.1"/><rect x="37.6" y="-1.6" width="6.6" height="5.4" fill="#bdbdbd"/><rect x="40.3" y="0.2" width="1.2" height="2" fill="#2a2a2a"/></g><g transform="translate(0,114.6)"><path d="M38.5 -3.6 Q38.5 -5.5 40.3 -5.5 Q42.1 -5.5 42.1 -3.8 V-2.8" fill="none" stroke="#bdbdbd" stroke-width="1.1"/><rect x="37.6" y="-1.6" width="6.6" height="5.4" fill="#bdbdbd"/><rect x="40.3" y="0.2" width="1.2" height="2" fill="#2a2a2a"/></g><g transform="translate(0,176.5)"><path d="M38.5 -3.6 Q38.5 -5.5 40.3 -5.5 Q42.1 -5.5 42.1 -3.8 V-2.8" fill="none" stroke="#bdbdbd" stroke-width="1.1"/><rect x="37.6" y="-1.6" width="6.6" height="5.4" fill="#bdbdbd"/><rect x="40.3" y="0.2" width="1.2" height="2" fill="#2a2a2a"/></g><g transform="translate(0,215.5)"><path d="M38.5 -3.6 Q38.5 -5.5 40.3 -5.5 Q42.1 -5.5 42.1 -3.8 V-2.8" fill="none" stroke="#bdbdbd" stroke-width="1.1"/><rect x="37.6" y="-1.6" width="6.6" height="5.4" fill="#bdbdbd"/><rect x="40.3" y="0.2" width="1.2" height="2" fill="#2a2a2a"/></g><g transform="translate(0,233)"><path d="M38.5 -3.6 Q38.5 -5.5 40.3 -5.5 Q42.1 -5.5 42.1 -3.8 V-2.8" fill="none" stroke="#bdbdbd" stroke-width="1.1"/><rect x="37.6" y="-1.6" width="6.6" height="5.4" fill="#bdbdbd"/><rect x="40.3" y="0.2" width="1.2" height="2" fill="#2a2a2a"/></g>
<g transform="translate(0,62)">
<rect x="78.8" y="-3.2" width="5.5" height="2.6" fill="none" stroke="#bdbdbd" stroke-width="1"/>
<rect x="78.8" y="0.6" width="5.5" height="2.6" fill="none" stroke="#bdbdbd" stroke-width="1"/>
<path d="M84.8 -3 H88.1 V3 H84.8 Z" fill="#bdbdbd"/><circle cx="86.6" cy="0" r="0.9" fill="#2a2a2a"/>
<path d="M97.6 0 Q103 -7 108.4 0 Q103 7 97.6 0 Z" fill="#c8c8c8"/><circle cx="103" cy="0" r="2.3" fill="#2a2a2a"/><circle cx="103" cy="0" r="1" fill="#666"/>
</g><g transform="translate(0,81.3)">
<rect x="78.8" y="-3.2" width="5.5" height="2.6" fill="none" stroke="#bdbdbd" stroke-width="1"/>
<rect x="78.8" y="0.6" width="5.5" height="2.6" fill="none" stroke="#bdbdbd" stroke-width="1"/>
<path d="M84.8 -3 H88.1 V3 H84.8 Z" fill="#bdbdbd"/><circle cx="86.6" cy="0" r="0.9" fill="#2a2a2a"/>
<path d="M97.6 0 Q103 -7 108.4 0 Q103 7 97.6 0 Z" fill="#c8c8c8"/><circle cx="103" cy="0" r="2.3" fill="#2a2a2a"/><circle cx="103" cy="0" r="1" fill="#666"/>
</g><g transform="translate(0,99.4)">
<rect x="78.8" y="-3.2" width="5.5" height="2.6" fill="none" stroke="#bdbdbd" stroke-width="1"/>
<rect x="78.8" y="0.6" width="5.5" height="2.6" fill="none" stroke="#bdbdbd" stroke-width="1"/>
<path d="M84.8 -3 H88.1 V3 H84.8 Z" fill="#bdbdbd"/><circle cx="86.6" cy="0" r="0.9" fill="#2a2a2a"/>
<path d="M97.6 0 Q103 -7 108.4 0 Q103 7 97.6 0 Z" fill="#c8c8c8"/><circle cx="103" cy="0" r="2.3" fill="#2a2a2a"/><circle cx="103" cy="0" r="1" fill="#666"/>
</g>
<g transform="translate(0,159.4)">
<rect x="78.8" y="-3.2" width="5.5" height="2.6" fill="none" stroke="#bdbdbd" stroke-width="1"/>
<rect x="78.8" y="0.6" width="5.5" height="2.6" fill="none" stroke="#bdbdbd" stroke-width="1"/>
<path d="M84.8 -3 H88.1 V3 H84.8 Z" fill="#bdbdbd"/><circle cx="86.6" cy="0" r="0.9" fill="#2a2a2a"/>
<path d="M100 2.8 V-2.7 L103 1 L106 -2.7 V2.8" fill="none" stroke="#a0a0a0" stroke-width="0.95"/>
<path d="M125 -2.1 Q124 -2.9 122.9 -2.7 Q121.3 -2.3 121.9 -0.8 Q122.4 0 123.6 0.3 Q125.4 0.9 124.9 2.2 Q124.2 3 122.8 2.9 Q121.6 2.7 121 2" fill="none" stroke="#a0a0a0" stroke-width="0.95"/>
<rect x="141.6" y="-4.5" width="3.8" height="6.5" rx="1.9" fill="#c4c4c4"/>
<path d="M140.6 0 Q140.6 3.4 143.5 3.4 Q146.4 3.4 146.4 0 M143.5 3.4 V5 M141.2 5.2 H145.8" fill="none" stroke="#c4c4c4" stroke-width="0.9"/>
</g><g transform="translate(0,215.5)">
<rect x="78.8" y="-3.2" width="5.5" height="2.6" fill="none" stroke="#bdbdbd" stroke-width="1"/>
<rect x="78.8" y="0.6" width="5.5" height="2.6" fill="none" stroke="#bdbdbd" stroke-width="1"/>
<path d="M84.8 -3 H88.1 V3 H84.8 Z" fill="#bdbdbd"/><circle cx="86.6" cy="0" r="0.9" fill="#2a2a2a"/>
<path d="M100 2.8 V-2.7 L103 1 L106 -2.7 V2.8" fill="none" stroke="#a0a0a0" stroke-width="0.95"/>
<path d="M125 -2.1 Q124 -2.9 122.9 -2.7 Q121.3 -2.3 121.9 -0.8 Q122.4 0 123.6 0.3 Q125.4 0.9 124.9 2.2 Q124.2 3 122.8 2.9 Q121.6 2.7 121 2" fill="none" stroke="#a0a0a0" stroke-width="0.95"/>
<rect x="141.6" y="-4.5" width="3.8" height="6.5" rx="1.9" fill="#c4c4c4"/>
<path d="M140.6 0 Q140.6 3.4 143.5 3.4 Q146.4 3.4 146.4 0 M143.5 3.4 V5 M141.2 5.2 H145.8" fill="none" stroke="#c4c4c4" stroke-width="0.9"/>
</g><g transform="translate(0,233)">
<rect x="78.8" y="-3.2" width="5.5" height="2.6" fill="none" stroke="#bdbdbd" stroke-width="1"/>
<rect x="78.8" y="0.6" width="5.5" height="2.6" fill="none" stroke="#bdbdbd" stroke-width="1"/>
<path d="M84.8 -3 H88.1 V3 H84.8 Z" fill="#bdbdbd"/><circle cx="86.6" cy="0" r="0.9" fill="#2a2a2a"/>
<path d="M100 2.8 V-2.7 L103 1 L106 -2.7 V2.8" fill="none" stroke="#a0a0a0" stroke-width="0.95"/>
<path d="M125 -2.1 Q124 -2.9 122.9 -2.7 Q121.3 -2.3 121.9 -0.8 Q122.4 0 123.6 0.3 Q125.4 0.9 124.9 2.2 Q124.2 3 122.8 2.9 Q121.6 2.7 121 2" fill="none" stroke="#a0a0a0" stroke-width="0.95"/>
<rect x="141.6" y="-4.5" width="3.8" height="6.5" rx="1.9" fill="#c4c4c4"/>
<path d="M140.6 0 Q140.6 3.4 143.5 3.4 Q146.4 3.4 146.4 0 M143.5 3.4 V5 M141.2 5.2 H145.8" fill="none" stroke="#c4c4c4" stroke-width="0.9"/>
</g>
<!-- keyframe nav v1 y 137.5 -->
<g fill="#4e4e4e"><path d="M81.2 137.5 L85 134.5 V140.5 Z M127 137.5 L123.2 134.5 V140.5 Z"/></g>
<path d="M103 134.6 L105.8 137.5 L103 140.4 L100.2 137.5 Z" fill="none" stroke="#4e4e4e" stroke-width="0.9"/>
<!-- a1 nav y 197 -->
<path d="M82.5 193 Q78.5 197 82.5 201 Q86.5 197 82.5 193 Z" fill="none" stroke="#bdbdbd" stroke-width="1"/><path d="M85.5 201 H87.5" stroke="#bdbdbd" stroke-width="1"/>
<g fill="#4e4e4e"><path d="M101.3 197 L105 194 V200 Z M146.5 197 L142.8 194 V200 Z"/></g>
<path d="M123.4 194.1 L126.2 197 L123.4 199.9 L120.6 197 Z" fill="none" stroke="#4e4e4e" stroke-width="0.9"/>
</svg>
<!-- clips -->
<div class="a" style="left:219.8px;top:90.5px;width:204.5px;height:55.8px;background:#933d40"></div>
<div class="a" style="left:220.2px;top:90.5px;width:99px;height:55.8px;background:linear-gradient(#e24c4e,#c03e44 35%,#852d36 75%,#69242e)"></div>
<svg style="left:231px;top:103px" width="80" height="36" id="tinytext"><g stroke="#f0d8d8" stroke-width="0.9" opacity="0.8" stroke-dasharray="2 0.7 1 0.6"><path d="M1 2.0 H22.0"/><path d="M1 5.2 H32.0"/><path d="M1 8.4 H27.0"/><path d="M1 11.6 H26.0"/><path d="M1 14.8 H25.0"/><path d="M1 18.0 H35.0"/><path d="M1 21.2 H58.0"/><path d="M1 24.4 H29.0"/><path d="M1 27.6 H76.0"/><path d="M1 30.8 H21.0"/></g></svg>
<div class="a" style="left:220.5px;top:90.8px;width:80px;height:11.8px;background:#779cd4"></div>
<div class="a" style="left:227.9px;top:93px;width:8.7px;height:8px;background:#8e8e8e;border:0.8px solid #555"></div>
<div class="t" style="left:241.5px;top:91.5px;color:#1a1a1a;font-size:8.8px;line-height:11px;letter-spacing:-0.45px">練習用 .mp4 [V]</div>
<svg style="left:219.8px;top:90.5px" width="5" height="5"><path d="M0 0 H4 L0 4 Z" fill="#e0e0e0"/></svg>
<div class="a" style="left:219.8px;top:150px;width:204.5px;height:56px;background:#8e3b3e"></div>
<div class="a" style="left:219.8px;top:178px;width:204.5px;height:28px;background:#7f3537"></div>
<div class="a" style="left:219.8px;top:164.2px;width:204.5px;height:1.3px;background:#5e92e0"></div>
<div class="a" style="left:219.8px;top:172.3px;width:204.5px;height:1.2px;background:#d8b8b2"></div>
<div class="a" style="left:219.8px;top:192px;width:204.5px;height:1.3px;background:#5e92e0"></div>
<div class="a" style="left:227.8px;top:152.4px;width:8.5px;height:8.1px;background:#8e8e8e;border:0.8px solid #555"></div>
<div class="a" style="left:220.5px;top:165.5px;width:6px;height:7.5px;background:#4a2426"></div>
<div class="a" style="left:221px;top:194px;width:6px;height:8px;background:#4a2426"></div>
<svg style="left:219.8px;top:150px" width="5" height="5"><path d="M0 0 H4 L0 4 Z" fill="#e0e0e0"/></svg>
<!-- playhead -->
<svg style="left:232.5px;top:43.5px" width="10" height="10"><path d="M0.5 0.5 H9.3 V5.5 L7 8.5 H2.8 L0.5 5.5 Z" fill="#1f8fef"/></svg>
<div class="a" style="left:237px;top:52px;width:1px;height:190.5px;background:#1f8fef"></div>
<!-- vertical scrollbar -->
<div class="a" style="left:425px;top:56px;width:7.7px;height:91px;background:#2e2e2e;border-radius:4px"></div>
<div class="a" style="left:425px;top:150px;width:7.7px;height:94px;background:#2e2e2e;border-radius:4px"></div>
<div class="a" style="left:425px;top:56px;width:7.7px;height:5px;background:#1a1a1a;border-radius:4px 4px 0 0"></div>
<div class="a" style="left:425px;top:238px;width:7.7px;height:6px;background:#1a1a1a;border-radius:0 0 4px 4px"></div>
<div class="a" style="left:425.1px;top:61px;width:7.6px;height:7.6px;border:1.7px solid #acacac;border-radius:50%;background:#2e2e2e"></div>
<div class="a" style="left:425.1px;top:138.3px;width:7.6px;height:7.6px;border:1.7px solid #acacac;border-radius:50%;background:#2e2e2e"></div>
<div class="a" style="left:425.1px;top:150.8px;width:7.6px;height:7.6px;border:1.7px solid #acacac;border-radius:50%;background:#2e2e2e"></div>
<div class="a" style="left:425.1px;top:231.2px;width:7.6px;height:7.6px;border:1.7px solid #acacac;border-radius:50%;background:#2e2e2e"></div>
<!-- horizontal scrollbar -->
<div class="a" style="left:9.8px;top:243.5px;width:414px;height:8.2px;background:#1c1c1c;border-radius:4px;border:1px solid #262626"></div>
<div class="a" style="left:19px;top:243.5px;width:146px;height:8.2px;background:#2e2e2e"></div>
<div class="a" style="left:19px;top:243.8px;width:7.6px;height:7.6px;border:1.7px solid #acacac;border-radius:50%;background:#2e2e2e"></div>
<div class="a" style="left:158.3px;top:243.8px;width:7.6px;height:7.6px;border:1.7px solid #acacac;border-radius:50%;background:#2e2e2e"></div>
</div>

<!-- ================= AUDIO METER ================= -->
<div class="pnl" style="left:790px;top:376px;width:60px;height:261px" id="meter">
<svg style="left:0;top:0" width="60" height="261">
<rect x="9.3" y="19.7" width="26.2" height="216" fill="#1e1e1e" stroke="#111" stroke-width="1.2"/>
<rect x="9.3" y="19.7" width="26.2" height="7" fill="#202020" stroke="#111" stroke-width="1.2"/>
<path d="M22.4 19.7 V26.7" stroke="#111" stroke-width="1.2"/>
<path d="M10 234.5 H21.5 M23.3 234.5 H34.8" stroke="#c8b418" stroke-width="1.3"/>
<path d="M36 28.7H40M36.299999999999955 32.1H38.299999999999955M36.299999999999955 35.5H38.299999999999955M36.299999999999955 38.9H38.299999999999955M36.299999999999955 42.4H38.299999999999955M36.299999999999955 45.8H38.299999999999955M36 49.2H40M36.299999999999955 52.6H38.299999999999955M36.299999999999955 56.0H38.299999999999955M36.299999999999955 59.4H38.299999999999955M36.299999999999955 62.8H38.299999999999955M36.299999999999955 66.2H38.299999999999955M36 69.7H40M36.299999999999955 73.1H38.299999999999955M36.299999999999955 76.5H38.299999999999955M36.299999999999955 79.9H38.299999999999955M36.299999999999955 83.3H38.299999999999955M36.299999999999955 86.7H38.299999999999955M36 90.1H40M36.299999999999955 93.6H38.299999999999955M36.299999999999955 97.0H38.299999999999955M36.299999999999955 100.4H38.299999999999955M36.299999999999955 103.8H38.299999999999955M36.299999999999955 107.2H38.299999999999955M36 110.6H40M36.299999999999955 114.0H38.299999999999955M36.299999999999955 117.4H38.299999999999955M36.299999999999955 120.9H38.299999999999955M36.299999999999955 124.3H38.299999999999955M36.299999999999955 127.7H38.299999999999955M36 131.1H40M36.299999999999955 134.5H38.299999999999955M36.299999999999955 137.9H38.299999999999955M36.299999999999955 141.3H38.299999999999955M36.299999999999955 144.8H38.299999999999955M36.299999999999955 148.2H38.299999999999955M36 151.6H40M36.299999999999955 155.0H38.299999999999955M36.299999999999955 158.4H38.299999999999955M36.299999999999955 161.8H38.299999999999955M36.299999999999955 165.2H38.299999999999955M36.299999999999955 168.6H38.299999999999955M36 172.1H40M36.299999999999955 175.5H38.299999999999955M36.299999999999955 178.9H38.299999999999955M36.299999999999955 182.3H38.299999999999955M36.299999999999955 185.7H38.299999999999955M36.299999999999955 189.1H38.299999999999955M36 192.5H40M36.299999999999955 196.0H38.299999999999955M36.299999999999955 199.4H38.299999999999955M36.299999999999955 202.8H38.299999999999955M36.299999999999955 206.2H38.299999999999955M36.299999999999955 209.6H38.299999999999955M36 213.0H40M36.299999999999955 216.4H38.299999999999955M36.299999999999955 219.8H38.299999999999955M36.299999999999955 223.3H38.299999999999955M36.299999999999955 226.7H38.299999999999955M36.299999999999955 230.1H38.299999999999955M36 233.5H40" stroke="#8a8a8a" stroke-width="0.9"/>
<text font-family="Liberation Sans" font-size="5.6" fill="#8c8c8c"><tspan x="41.6" y="31.0">0</tspan><tspan x="41" y="51.8">-6</tspan><tspan x="41" y="72.3">-12</tspan><tspan x="41" y="93.3">-18</tspan><tspan x="41" y="113.5">-24</tspan><tspan x="41" y="134.3">-30</tspan><tspan x="41" y="154.8">-36</tspan><tspan x="41" y="176.0">-42</tspan><tspan x="41" y="195.9">-48</tspan><tspan x="41" y="217.1">-54</tspan><tspan x="41" y="235.8">dB</tspan></text>
<rect x="9.7" y="239.5" width="11.3" height="12.5" rx="1" fill="#232323" stroke="#2e2e2e" stroke-width="0.8"/>
<rect x="22.7" y="239.5" width="11.3" height="12.5" rx="1" fill="#232323" stroke="#2e2e2e" stroke-width="0.8"/>
<text font-family="Liberation Sans" font-size="8" fill="#b8b8b8" y="248.8"><tspan x="12.8">S</tspan><tspan x="25.8">S</tspan></text>
</svg>
</div>

<div class="a" style="left:0;top:6px;width:1024px;height:1px;background:#1a1a1a"></div>
</body></html>
